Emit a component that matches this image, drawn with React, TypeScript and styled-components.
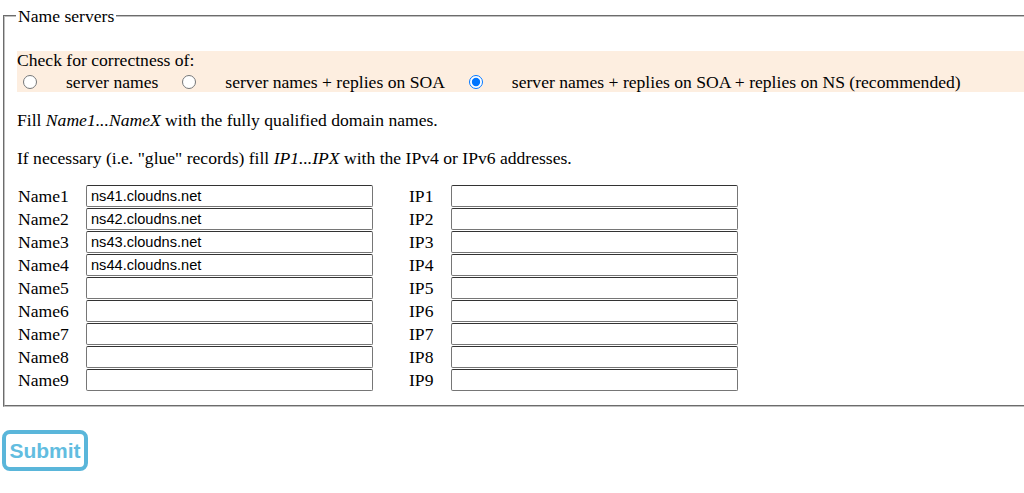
import React from "react";
import styled, { createGlobalStyle } from "styled-components";

const GlobalStyle = createGlobalStyle`
  html, body {
    margin: 0;
    padding: 0;
    overflow-x: hidden;
    background: #ffffff;
  }
  body {
    font-family: "Liberation Serif", "Times New Roman", serif;
    font-size: 17.6px;
    color: #000000;
  }
`;

const Page = styled.div`
  padding-top: 6px;
  width: 1100px;
`;

const FieldSet = styled.fieldset`
  margin: 0 0 0 3px;
  padding: 0 12px 14px 12px;
  border: 2px groove #c0c0c0;
  border-right: none;
  width: 1080px;
  box-sizing: border-box;
`;

const Legend = styled.legend`
  padding: 0 2px;
  margin-left: -1px;
  font-size: 17.6px;
  line-height: 20px;
`;

const OptionBand = styled.div`
  margin: 25px 0 18px;
  background: #fdeee0;
  line-height: 18px;
`;

const OptionRow = styled.div`
  display: flex;
  align-items: center;
  height: 23px;
  padding-top: 2px;
  box-sizing: border-box;
`;

const Radio = styled.input.attrs({ type: "radio", name: "check" })`
  margin: 0 29px 0 ${(p: { $first?: boolean }) => (p.$first ? "6px" : "24px")};
  width: 14px;
  height: 14px;
`;

const OptionLabel = styled.span`
  white-space: nowrap;
`;

const Para = styled.p`
  margin: 18px 0 16px;
  line-height: 20px;
`;

const Grid = styled.div`
  display: grid;
  grid-template-columns: 69px 287px 36px 42px 287px;
  grid-auto-rows: 23px;
  align-items: center;
  margin-top: 16px;
`;

const Label = styled.span`
  line-height: 20px;
  margin-left: 1px;
`;

const TextInput = styled.input.attrs({ type: "text" })`
  grid-column: ${(p: { $col: number }) => p.$col};
  box-sizing: border-box;
  height: 22px;
  width: 287px;
  margin: 0;
  padding: 1px 4px;
  border: 1px solid #767676;
  border-top-color: #333333;
  border-radius: 2px;
  font-family: "Liberation Sans", Arial, sans-serif;
  font-size: 14.6px;
  color: #000000;
  background: #ffffff;
`;

const IpLabel = styled(Label)`
  grid-column: 4;
  margin-left: 0;
`;

const SubmitButton = styled.button`
  margin: 23px 0 0 2px;
  width: 86px;
  height: 41px;
  box-sizing: border-box;
  border: 4px solid #5ab6da;
  border-radius: 8px;
  background: #ffffff;
  color: #62bde0;
  font-family: "Liberation Sans", Arial, sans-serif;
  font-weight: bold;
  font-size: 21px;
  padding: 0;
  cursor: pointer;
`;

const names = ["ns41.cloudns.net", "ns42.cloudns.net", "ns43.cloudns.net", "ns44.cloudns.net", "", "", "", "", ""];

export default function App() {
  return (
    <Page>
      <GlobalStyle />
      <FieldSet>
        <Legend>Name servers</Legend>
        <OptionBand>
          Check for correctness of:
          <OptionRow>
            <Radio $first />
            <OptionLabel>server names</OptionLabel>
            <Radio />
            <OptionLabel>server names + replies on SOA</OptionLabel>
            <Radio defaultChecked />
            <OptionLabel>server names + replies on SOA + replies on NS (recommended)</OptionLabel>
          </OptionRow>
        </OptionBand>
        <Para>
          Fill <i>Name1...NameX</i> with the fully qualified domain names.
        </Para>
        <Para>
          If necessary (i.e. "glue" records) fill <i>IP1...IPX</i> with the IPv4 or IPv6 addresses.
        </Para>
        <Grid>
          {names.map((n, i) => (
            <React.Fragment key={i}>
              <Label>Name{i + 1}</Label>
              <TextInput $col={2} defaultValue={n} />
              <IpLabel>IP{i + 1}</IpLabel>
              <TextInput $col={5} defaultValue="" />
            </React.Fragment>
          ))}
        </Grid>
      </FieldSet>
      <SubmitButton>Submit</SubmitButton>
    </Page>
  );
}
